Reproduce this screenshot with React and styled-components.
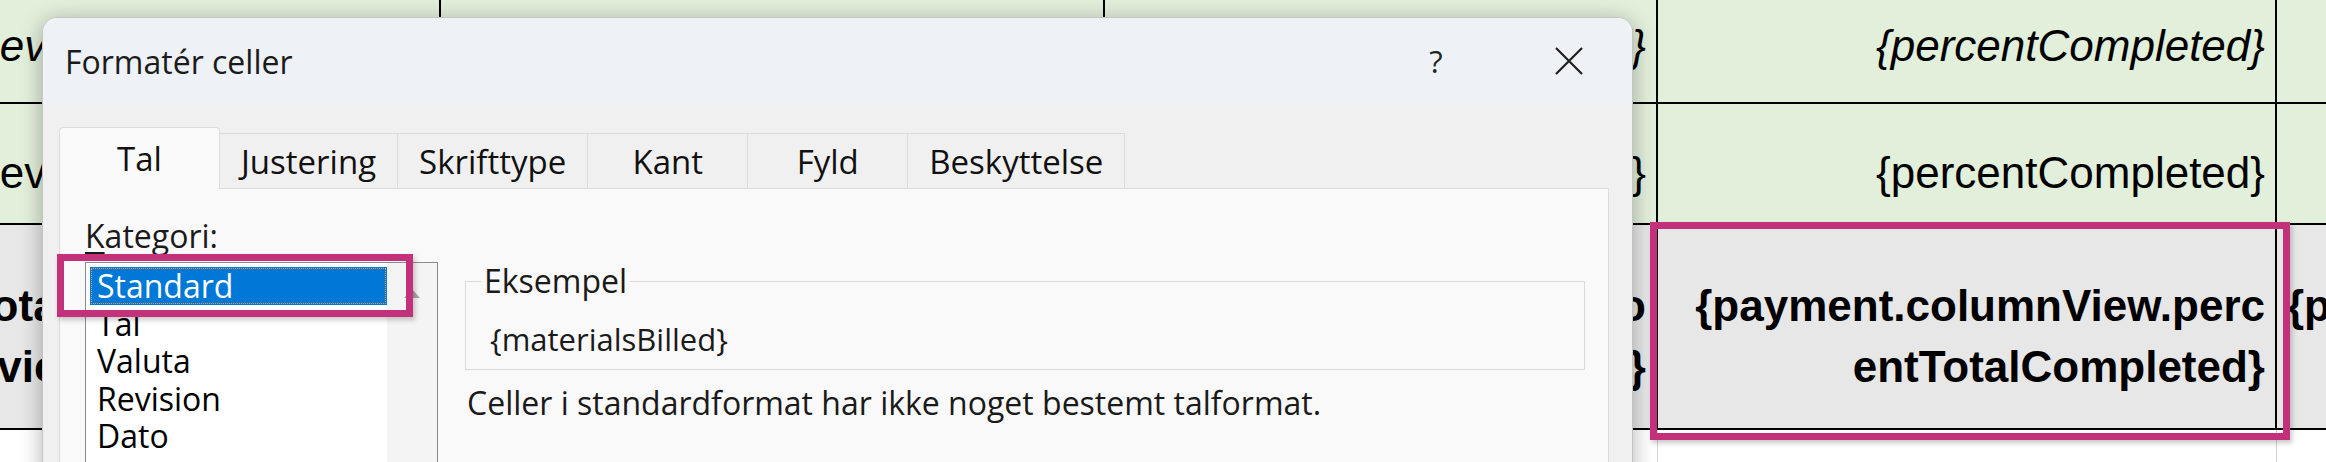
import React from "react";
import styled, { createGlobalStyle } from "styled-components";

const Global = createGlobalStyle`
  html, body {
    margin: 0;
    padding: 0;
    background: #ffffff;
    overflow: hidden;
  }
`;

const Screen = styled.div`
  position: relative;
  width: 2326px;
  height: 462px;
  overflow: hidden;
  background: #ffffff;
`;

const Sheet = styled.div`
  display: grid;
  grid-template-columns: 473px 664px 553px 619px 619px;
  grid-template-rows: 104px 121px 205px 40px;
  margin-left: -32px;
  font-family: "Liberation Sans", Arial, sans-serif;
  font-size: 44px;
  color: #000;
`;

const Cell = styled.div`
  position: relative;
  box-sizing: border-box;
  background: ${(p) => p.$bg || "#e2efda"};
  border-right: ${(p) => (p.$faint ? "1px solid #d4d4d4" : "2px solid #000")};
  border-bottom: ${(p) => (p.$faint ? "none" : "2px solid #000")};
  display: flex;
  align-items: flex-end;
  justify-content: ${(p) => (p.$left || p.$start ? "flex-start" : "flex-end")};
  text-align: ${(p) => (p.$left ? "left" : "right")};
  padding: 0 10px ${(p) => p.$pb || 0}px ${(p) => (p.$left ? 0 : 10)}px;
  line-height: 61px;
  font-weight: ${(p) => (p.$bold ? 700 : 400)};
  font-style: ${(p) => (p.$italic ? "italic" : "normal")};
  white-space: nowrap;
`;

const Mark = styled.div`
  position: absolute;
  top: ${(p) => p.$t}px;
  left: ${(p) => p.$l}px;
  right: ${(p) => p.$r}px;
  bottom: ${(p) => p.$b}px;
  border: 7px solid #c4317b;
  box-shadow: 2px 3px 5px rgba(0, 0, 0, 0.22);
  pointer-events: none;
  z-index: 3;
`;

const Dialog = styled.div`
  position: absolute;
  left: 42px;
  top: 17px;
  width: 1591px;
  height: 490px;
  box-sizing: border-box;
  background: #f0f0f0;
  border: 1px solid #c4c4c4;
  border-radius: 15px 15px 0 0;
  box-shadow: 0 4px 22px rgba(0, 0, 0, 0.3);
  overflow: hidden;
  font-family: "Segoe UI", "Open Sans", sans-serif;
  color: #1a1a1a;
  z-index: 2;
`;

const TitleBar = styled.div`
  height: 86px;
  display: flex;
  align-items: center;
  padding: 0 28px 0 22px;
  background: #eef2f6;
`;

const Title = styled.div`
  flex: 1;
  font-size: 32px;
  color: #1b1b1b;
`;

const HelpButton = styled.div`
  width: 60px;
  text-align: center;
  font-size: 31px;
  color: #222;
  margin-right: 68px;
`;

const CloseButton = styled.div`
  width: 70px;
  display: flex;
  justify-content: center;
  align-items: center;
`;

const Body = styled.div`
  padding: 23px 23px 0 16px;
`;

const TabRow = styled.div`
  display: flex;
  align-items: flex-end;
  height: 61px;
`;

const Tab = styled.div`
  position: relative;
  box-sizing: border-box;
  height: ${(p) => (p.$active ? 62 : 55)}px;
  min-width: ${(p) => (p.$active ? 161 : 160)}px;
  padding: 0 21px;
  display: flex;
  align-items: center;
  justify-content: center;
  font-size: 33px;
  color: #111;
  background: ${(p) => (p.$active ? "#f9f9f9" : "#f0f0f0")};
  border: 1px solid #dcdcdc;
  border-bottom: none;
  border-left: ${(p) => (p.$first || p.$active ? "1px solid #dcdcdc" : "none")};
  border-radius: ${(p) => (p.$active ? "4px 4px 0 0" : "0")};
  margin-bottom: ${(p) => (p.$active ? -1 : 0)}px;
  z-index: ${(p) => (p.$active ? 1 : 0)};
`;

const Panel = styled.div`
  box-sizing: border-box;
  height: 320px;
  background: #f9f9f9;
  border: 1px solid #dcdcdc;
  padding: 28px 23px 0 25px;
`;

const Label = styled.div`
  font-size: 32px;
  line-height: 38px;
  height: 38px;
  span {
    text-decoration: underline;
    text-underline-offset: 4px;
  }
`;

const Columns = styled.div`
  display: flex;
  gap: 27px;
  margin-top: 7px;
`;

const ListBox = styled.div`
  position: relative;
  box-sizing: border-box;
  width: 353px;
  height: 240px;
  flex-shrink: 0;
  display: flex;
  background: #ffffff;
  border: 1px solid #8a8a8a;
  padding: 4px 0 0 4px;
`;

const Items = styled.div`
  flex: 1;
`;

const Item = styled.div`
  position: relative;
  box-sizing: border-box;
  height: 37.5px;
  line-height: 37.5px;
  padding-left: 7px;
  font-size: 32px;
  color: ${(p) => (p.$selected ? "#ffffff" : "#000")};
  background: ${(p) => (p.$selected ? "#0078d7" : "transparent")};
  outline: ${(p) => (p.$selected ? "1px dotted #f0a030" : "none")};
  outline-offset: -2px;
`;

const ScrollBar = styled.div`
  width: 50px;
  margin-top: -4px;
  background: #f4f4f4;
  display: flex;
  justify-content: center;
  padding-top: 26px;
  box-sizing: border-box;
`;

const Arrow = styled.div`
  width: 0;
  height: 0;
  border-left: 8px solid transparent;
  border-right: 8px solid transparent;
  border-bottom: 9px solid #a6a6a6;
`;

const Right = styled.div`
  flex: 1;
`;

const Group = styled.fieldset`
  margin: 0;
  border: 1px solid #dadada;
  padding: 20px 24px 11px 24px;
  legend {
    font-size: 32px;
    line-height: 38px;
    padding: 0 3px;
    margin-left: -9px;
  }
`;

const Sample = styled.div`
  font-size: 31px;
  line-height: 38px;
`;

const Description = styled.div`
  margin-top: 14px;
  margin-left: 2px;
  font-size: 32px;
  line-height: 38px;
`;

const rows = [
  { pb: 26, italic: true },
  { pb: 20 },
];

export default function App() {
  return (
    <Screen>
      <Global />
      <Sheet>
        {rows.map((r, i) => (
          <React.Fragment key={i}>
            <Cell $left $italic={r.italic} $pb={r.pb}>
              Revision
            </Cell>
            <Cell $italic={r.italic} $pb={r.pb}>
              {"{revision}"}
            </Cell>
            <Cell $italic={r.italic} $pb={r.pb}>
              {"{materialsBilled}"}
            </Cell>
            <Cell $italic={r.italic} $pb={r.pb}>
              {"{percentCompleted}"}
            </Cell>
            <Cell $italic={r.italic} $pb={r.pb}>
              {"{percentCompleted}"}
            </Cell>
          </React.Fragment>
        ))}
        <Cell $left $bold $bg="#e7e7e7" $pb={31}>
          Total
          <br />
          Evictions
        </Cell>
        <Cell $bold $bg="#e7e7e7" $pb={31}>
          {"{payment.columnView.sum"}
          <br />
          {"Total}"}
        </Cell>
        <Cell $bold $bg="#e7e7e7" $pb={31}>
          {"{payment.billedTo"}
          <br />
          {"tal}"}
        </Cell>
        <Cell $bold $bg="#e7e7e7" $pb={31}>
          <div>
            {"{payment.columnView.perc"}
            <br />
            {"entTotalCompleted}"}
          </div>
          <Mark $t={-3} $l={-8} $r={-15} $b={-12} />
        </Cell>
        <Cell $start $bold $bg="#e7e7e7" $pb={31}>
          <div>
            {"{payment.columnView.perc"}
            <br />
            {"entTotalCompleted}"}
          </div>
        </Cell>
        <Cell $faint $bg="#ffffff" />
        <Cell $faint $bg="#ffffff" />
        <Cell $faint $bg="#ffffff" />
        <Cell $faint $bg="#ffffff" />
        <Cell $faint $bg="#ffffff" />
      </Sheet>

      <Dialog>
        <TitleBar>
          <Title>Formatér celler</Title>
          <HelpButton>?</HelpButton>
          <CloseButton>
            <svg width="30" height="30" viewBox="0 0 30 30">
              <path
                d="M2 2 L28 28 M28 2 L2 28"
                stroke="#1f1f1f"
                strokeWidth="2.2"
                fill="none"
              />
            </svg>
          </CloseButton>
        </TitleBar>
        <Body>
          <TabRow>
            <Tab $active $first>
              Tal
            </Tab>
            <Tab>Justering</Tab>
            <Tab>Skrifttype</Tab>
            <Tab>Kant</Tab>
            <Tab>Fyld</Tab>
            <Tab>Beskyttelse</Tab>
          </TabRow>
          <Panel>
            <Label>
              <span>K</span>ategori:
            </Label>
            <Columns>
              <ListBox>
                <Items>
                  <Item $selected>
                    Standard
                    <Mark $t={-13} $l={-33} $r={-26} $b={-12} />
                  </Item>
                  <Item>Tal</Item>
                  <Item>Valuta</Item>
                  <Item>Revision</Item>
                  <Item>Dato</Item>
                </Items>
                <ScrollBar>
                  <Arrow />
                </ScrollBar>
              </ListBox>
              <Right>
                <Group>
                  <legend>Eksempel</legend>
                  <Sample>{"{materialsBilled}"}</Sample>
                </Group>
                <Description>
                  Celler i standardformat har ikke noget bestemt talformat.
                </Description>
              </Right>
            </Columns>
          </Panel>
        </Body>
      </Dialog>
    </Screen>
  );
}
